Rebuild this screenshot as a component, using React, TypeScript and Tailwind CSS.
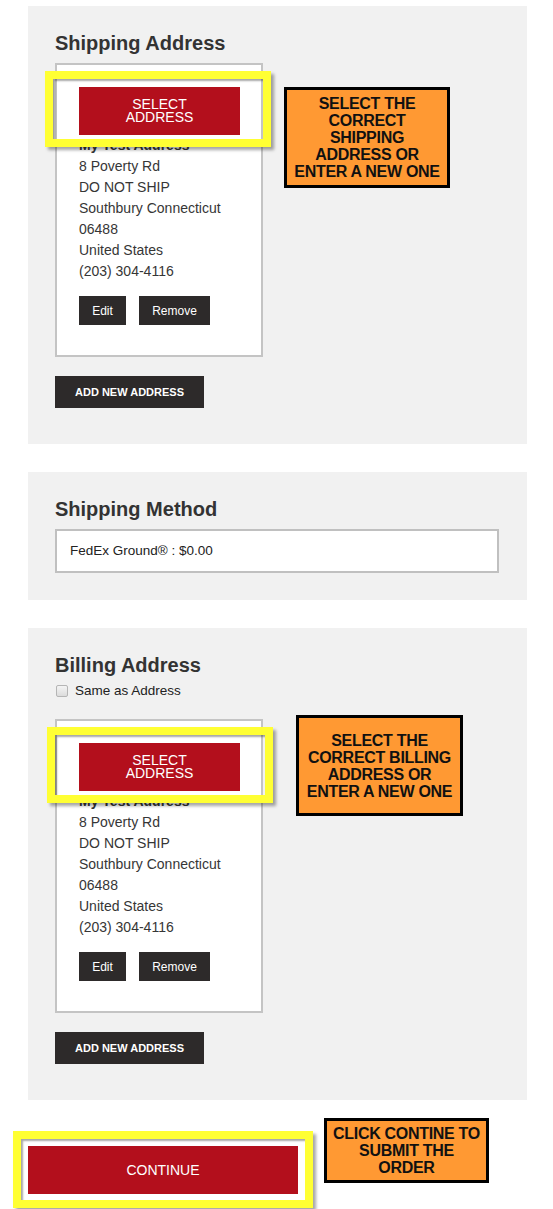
import React from "react";

const font = { fontFamily: '"Liberation Sans", Arial, sans-serif' };

const addressLines = [
  "8 Poverty Rd",
  "DO NOT SHIP",
  "Southbury Connecticut",
  "06488",
  "United States",
  "(203) 304-4116",
];

// yellow highlight frame drawn over the screenshot
const Highlight = ({ className }: { className: string }) => (
  <div
    className={`absolute pointer-events-none border-[8px] border-[#ffff33] shadow-[3px_3px_3px_rgba(0,0,0,0.35),inset_2px_2px_2px_rgba(0,0,0,0.35)] ${className}`}
  />
);

const Callout = ({ lines, className }: { lines: string[]; className: string }) => (
  <div
    className={`absolute flex flex-col items-center justify-center border-[3px] border-black bg-[#ff9933] text-[16px] leading-[17px] font-bold tracking-[-0.3px] text-[#111] ${className}`}
  >
    {lines.map((l) => (
      <div key={l} className="whitespace-nowrap">
        {l}
      </div>
    ))}
  </div>
);

const AddressCard = () => (
  <div className="w-[208px] border-2 border-[#c4c4c4] bg-white pl-[22px] pr-[21px] pt-[22px] pb-[30px]">
    <button className="flex h-[48px] w-[161px] flex-col items-center justify-center bg-[#b30f1c] text-[14px] leading-[13px] text-white">
      <span>SELECT</span>
      <span>ADDRESS</span>
    </button>
    <div className="text-[14px] leading-[21px] text-[#363636]">
      <p className="font-bold">My Test Address</p>
      {addressLines.map((line) => (
        <p key={line}>{line}</p>
      ))}
    </div>
    <div className="mt-[14px] flex gap-[13px]">
      <button className="h-[29px] w-[47px] bg-[#2d2a2a] text-[12px] text-white">Edit</button>
      <button className="h-[29px] w-[71px] bg-[#2d2a2a] text-[12px] text-white">Remove</button>
    </div>
  </div>
);

const AddButton = () => (
  <button className="mt-[19px] h-[32px] w-[149px] bg-[#2d2a2a] text-[11px] font-bold text-white">
    ADD NEW ADDRESS
  </button>
);

export default function App() {
  return (
    <div className="min-h-[1209px] bg-white pt-[6px]" style={font}>
      <div className="ml-[28px] flex w-[499px] flex-col gap-[28px]">
        {/* shipping address */}
        <section className="relative bg-[#f1f1f1] pl-[27px] pr-[28px] pt-[27px] pb-[36px]">
          <h2 className="mb-[10px] text-[20px] leading-[20px] font-bold text-[#333]">Shipping Address</h2>
          <AddressCard />
          <AddButton />
          <Highlight className="left-[17px] top-[65px] h-[76px] w-[226px]" />
          <Callout
            className="left-[256px] top-[81px] h-[101px] w-[166px]"
            lines={["SELECT THE", "CORRECT", "SHIPPING", "ADDRESS OR", "ENTER A NEW ONE"]}
          />
        </section>

        {/* shipping method */}
        <section className="bg-[#f1f1f1] pl-[27px] pr-[28px] pt-[27px] pb-[27px]">
          <h2 className="mb-[10px] text-[20px] leading-[20px] font-bold text-[#333]">Shipping Method</h2>
          <div className="flex h-[44px] items-center border-2 border-[#c0c0c0] bg-white px-[13px] text-[13.5px] text-[#222]">
            FedEx Ground® : $0.00
          </div>
        </section>

        {/* billing address */}
        <section className="relative bg-[#f1f1f1] pl-[27px] pr-[28px] pt-[27px] pb-[36px]">
          <h2 className="mb-[6px] text-[20px] leading-[20px] font-bold text-[#333]">Billing Address</h2>
          <label className="mb-[18px] flex h-[20px] items-center text-[13.5px] text-[#222]">
            <span className="ml-[1px] mr-[7px] h-[12px] w-[12px] rounded-[2px] border border-[#b5b5b5] bg-gradient-to-b from-[#f4f4f4] to-[#dcdcdc]" />
            Same as Address
          </label>
          <AddressCard />
          <AddButton />
          <Highlight className="left-[19px] top-[99px] h-[76px] w-[226px]" />
          <Callout
            className="left-[268px] top-[87px] h-[101px] w-[167px]"
            lines={["SELECT THE", "CORRECT BILLING", "ADDRESS OR", "ENTER A NEW ONE"]}
          />
        </section>
      </div>

      {/* continue */}
      <div className="relative pt-[46px] pl-[28px]">
        <button className="h-[48px] w-[270px] bg-[#b30f1c] text-[14px] text-white">CONTINUE</button>
        <Highlight className="left-[13px] top-[31px] h-[77px] w-[300px]" />
        <Callout
          className="left-[324px] top-[18px] h-[65px] w-[165px]"
          lines={["CLICK CONTINE TO", "SUBMIT THE", "ORDER"]}
        />
      </div>
    </div>
  );
}
